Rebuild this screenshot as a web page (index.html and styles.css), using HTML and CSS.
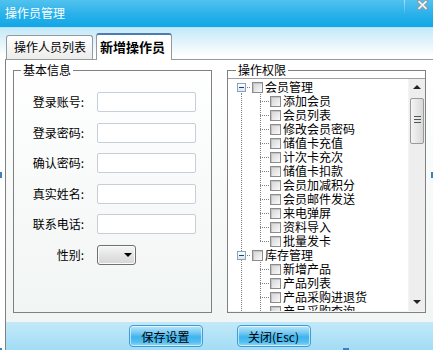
FILE: index.html
```html
<!DOCTYPE html>
<html lang="zh-CN">
<head>
    <meta charset="UTF-8">
    <title>操作员管理</title>
    <link rel="stylesheet" href="styles.css">
</head>
<body>
    <div class="window">
        <div class="titlebar">
            <span class="title">操作员管理</span>
            <span class="sep"></span>
            <svg class="close" width="11" height="10" viewBox="0 0 11 10">
                <path d="M1.5 1.2 L9.5 8.8 M9.5 1.2 L1.5 8.8" stroke="#8a9aa6" stroke-width="3.6" stroke-linecap="square"/>
                <path d="M1.5 1.2 L9.5 8.8 M9.5 1.2 L1.5 8.8" stroke="#f2f4f5" stroke-width="1.8"/>
            </svg>
        </div>

        <div class="tabbar">
            <div class="tab">操作人员列表</div>
            <div class="tab active">新增操作员</div>
        </div>

        <div class="page">
            <div class="groups">
                <fieldset class="group basic">
                    <legend>基本信息</legend>
                    <div class="form">
                        <label>登录账号:</label><input type="text">
                        <label>登录密码:</label><input type="password">
                        <label>确认密码:</label><input type="password">
                        <label>真实姓名:</label><input type="text">
                        <label>联系电话:</label><input type="text">
                        <label>性别:</label>
                        <div class="select"><span class="arrow"></span></div>
                    </div>
                </fieldset>

                <fieldset class="group rights">
                    <legend>操作权限</legend>
                    <div class="tree">
                        <div class="nodes">
                            <div class="row"><span class="ln root first"><i class="exp"></i></span><span class="cb rootcb"></span><span class="txt">会员管理</span></div>
                            <div class="row"><span class="ln v"></span><span class="ln t"></span><span class="cb"></span><span class="txt">添加会员</span></div>
                            <div class="row"><span class="ln v"></span><span class="ln t"></span><span class="cb"></span><span class="txt">会员列表</span></div>
                            <div class="row"><span class="ln v"></span><span class="ln t"></span><span class="cb"></span><span class="txt">修改会员密码</span></div>
                            <div class="row"><span class="ln v"></span><span class="ln t"></span><span class="cb"></span><span class="txt">储值卡充值</span></div>
                            <div class="row"><span class="ln v"></span><span class="ln t"></span><span class="cb"></span><span class="txt">计次卡充次</span></div>
                            <div class="row"><span class="ln v"></span><span class="ln t"></span><span class="cb"></span><span class="txt">储值卡扣款</span></div>
                            <div class="row"><span class="ln v"></span><span class="ln t"></span><span class="cb"></span><span class="txt">会员加减积分</span></div>
                            <div class="row"><span class="ln v"></span><span class="ln t"></span><span class="cb"></span><span class="txt">会员邮件发送</span></div>
                            <div class="row"><span class="ln v"></span><span class="ln t"></span><span class="cb"></span><span class="txt">来电弹屏</span></div>
                            <div class="row"><span class="ln v"></span><span class="ln t"></span><span class="cb"></span><span class="txt">资料导入</span></div>
                            <div class="row"><span class="ln v"></span><span class="ln t last"></span><span class="cb"></span><span class="txt">批量发卡</span></div>
                            <div class="row"><span class="ln root"><i class="exp"></i></span><span class="cb rootcb"></span><span class="txt">库存管理</span></div>
                            <div class="row"><span class="ln v"></span><span class="ln t"></span><span class="cb"></span><span class="txt">新增产品</span></div>
                            <div class="row"><span class="ln v"></span><span class="ln t"></span><span class="cb"></span><span class="txt">产品列表</span></div>
                            <div class="row"><span class="ln v"></span><span class="ln t"></span><span class="cb"></span><span class="txt">产品采购进退货</span></div>
                            <div class="row"><span class="ln v"></span><span class="ln t"></span><span class="cb"></span><span class="txt">产品采购查询</span></div>
                        </div>
                        <div class="scrollbar">
                            <div class="sb-btn"><span class="up"></span></div>
                            <div class="thumb"><span class="grip"></span></div>
                            <div class="sb-track"></div>
                            <div class="sb-btn"><span class="down"></span></div>
                        </div>
                    </div>
                </fieldset>
            </div>

            <div class="footer">
                <button>保存设置</button>
                <button>关闭(Esc)</button>
            </div>
        </div>

        <span class="handle h-left"></span>
        <span class="handle h-right"></span>
        <span class="handle h-bottom"></span>
        <span class="handle h-corner"></span>
    </div>
</body>
</html>
```

FILE: styles.css
```css
body {
    margin: 0;
    padding: 0;
    overflow: hidden;
    font-family: 'Noto Sans CJK SC', 'Noto Sans', sans-serif;
    font-size: 12px;
    color: #000;
}

.window {
    position: relative;
    width: 433px;
    height: 350px;
    overflow: hidden;
    background: #fff;
}

.titlebar {
    position: relative;
    height: 28px;
    background: linear-gradient(#52c2ee, #2bb2ea 50%, #10a6e6);
    border-bottom: 1px solid #b6e2f5;
    box-sizing: border-box;
}

.title {
    display: block;
    padding-left: 5px;
    line-height: 26px;
    color: #fff;
    font-size: 12px;
}

.sep {
    position: absolute;
    left: 404px;
    top: 0;
    width: 1px;
    height: 15px;
    background: linear-gradient(#a6e0f6, rgba(166, 224, 246, 0));
}

.close {
    position: absolute;
    left: 417px;
    top: 0;
}

.tabbar {
    position: relative;
    z-index: 1;
    height: 32px;
    margin-bottom: -1px;
    padding-left: 6px;
    display: flex;
    align-items: flex-end;
    gap: 3px;
    background: linear-gradient(#c3e9f8, #e6f5fc 16px, #fff 28px) no-repeat;
    background-size: 100% 31px;
    box-sizing: border-box;
}

.tab {
    width: 87px;
    height: 24px;
    margin-bottom: 1px;
    box-sizing: border-box;
    border: 1px solid #919b9c;
    border-bottom: none;
    border-radius: 3px 3px 0 0;
    background: linear-gradient(#fff, #ececeb);
    padding-left: 7px;
    line-height: 22px;
}

.tab.active {
    width: 76px;
    height: 27px;
    margin-bottom: 0;
    padding-left: 3px;
    background: #fff;
    border-top: 2px solid #4b7cb6;
    font-weight: bold;
    font-size: 13px;
    line-height: 24px;
}

.page {
    margin-left: 5px;
    height: 291px;
    border-left: 1px solid #808080;
    border-top: 1px solid #919b9c;
    box-sizing: border-box;
    background: linear-gradient(#fff, #f1f5f4 262px);
    display: flex;
    flex-direction: column;
}

.groups {
    display: flex;
    gap: 15px;
    padding: 2px 0 0 7px;
}

.group {
    margin: 0;
    padding: 0;
    width: 199px;
    height: 251px;
    box-sizing: border-box;
    border: 1px solid #808080;
    min-width: 0;
}

.group legend {
    padding: 0 2px;
    margin-left: 7px;
    line-height: 16px;
    font-size: 12px;
}

.rights legend {
    margin-left: 8px;
}

.form {
    display: grid;
    grid-template-columns: 70px 99px;
    grid-auto-rows: 20px;
    column-gap: 13px;
    row-gap: 10.6px;
    padding-top: 14px;
    align-items: center;
}

.form label {
    text-align: right;
    font-size: 12px;
    line-height: 20px;
}

.form input {
    width: 99px;
    height: 20px;
    box-sizing: border-box;
    margin: 0;
    border: 1px solid #c6ced8;
    border-radius: 2px;
    background: #fff;
    font-size: 12px;
}

.select {
    position: relative;
    width: 39px;
    height: 20px;
    box-sizing: border-box;
    border: 1px solid #707070;
    border-radius: 3px;
    background: linear-gradient(#f6f6f6, #e4e4e4 50%, #d6d6d6);
    box-shadow: inset 0 0 0 1px #fbfbfb;
}

.select .arrow {
    position: absolute;
    left: 26px;
    top: 7px;
    border-left: 4px solid transparent;
    border-right: 4px solid transparent;
    border-top: 4px solid #000;
}

.tree {
    display: flex;
    height: 233px;
    box-sizing: border-box;
    border-top: 1px solid #a0a0a0;
    background: #fff;
    overflow: hidden;
}

.nodes {
    flex: 1;
    padding: 1px 0 0 3px;
    overflow: hidden;
}

.row {
    display: flex;
    align-items: center;
    height: 14px;
    white-space: nowrap;
}

.ln {
    position: relative;
    flex: none;
    width: 20px;
    height: 14px;
}

.ln.t {
    width: 19px;
}

.ln::before,
.ln::after {
    content: "";
    position: absolute;
}

.ln.v::before,
.ln.root::before {
    left: 10px;
    top: 0;
    bottom: 0;
    width: 1px;
    background: repeating-linear-gradient(#808080 0 1px, transparent 1px 2px);
}

.ln.root.first::before {
    top: 7px;
}

.ln.root::after {
    left: 14px;
    top: 7px;
    width: 6px;
    height: 1px;
    background: repeating-linear-gradient(90deg, #808080 0 1px, transparent 1px 2px);
}

.ln.t::before {
    left: 9px;
    top: 0;
    bottom: 0;
    width: 1px;
    background: repeating-linear-gradient(#808080 0 1px, transparent 1px 2px);
}

.ln.t.last::before {
    bottom: 7px;
}

.ln.t::after {
    left: 9px;
    top: 7px;
    width: 10px;
    height: 1px;
    background: repeating-linear-gradient(90deg, #808080 0 1px, transparent 1px 2px);
}

.exp {
    position: absolute;
    z-index: 1;
    left: 6px;
    top: 3px;
    width: 9px;
    height: 9px;
    box-sizing: border-box;
    border: 1px solid #8aa4bd;
    background: linear-gradient(#fff, #dfe6ec);
}

.exp::after {
    content: "";
    position: absolute;
    left: 1px;
    top: 3px;
    width: 5px;
    height: 1px;
    background: #1c3f94;
}

.cb {
    flex: none;
    width: 11px;
    height: 11px;
    box-sizing: border-box;
    border: 1px solid #8c8c8c;
    background: linear-gradient(135deg, #d2d2d2, #eeeeee 70%, #fafafa);
    box-shadow: inset 1px 1px 0 #c4c4c4;
}

.cb.rootcb {
    margin-left: 1px;
}

.txt {
    margin-left: 2px;
    font-size: 12px;
    line-height: 14px;
}

.scrollbar {
    flex: none;
    width: 16px;
    display: flex;
    flex-direction: column;
    background: #eeeeee;
    border-left: 1px solid #f4f4f4;
}

.sb-btn {
    position: relative;
    height: 18px;
    flex: none;
}

.sb-btn .up,
.sb-btn .down {
    position: absolute;
    left: 4px;
    border-left: 4px solid transparent;
    border-right: 4px solid transparent;
}

.sb-btn .up {
    top: 6px;
    border-bottom: 4px solid #222;
}

.sb-btn .down {
    top: 7px;
    border-top: 4px solid #222;
}

.thumb {
    position: relative;
    flex: none;
    height: 46px;
    margin: 1px 1px 0 1px;
    box-sizing: border-box;
    border: 1px solid #9a9a9a;
    border-radius: 2px;
    background: linear-gradient(90deg, #f4f4f4, #e4e4e4 60%, #d8d8d8);
}

.grip {
    position: absolute;
    left: 3px;
    top: 17px;
    width: 7px;
    height: 7px;
    background: repeating-linear-gradient(#555 0 1px, transparent 1px 3px);
}

.sb-track {
    flex: 1;
}

.footer {
    margin-top: 9px;
    flex: 1;
    display: flex;
    justify-content: center;
    align-items: flex-start;
    gap: 34px;
    padding-top: 3px;
    background: linear-gradient(#c3e9f9, #a2dcf5);
}

.footer button {
    width: 74px;
    height: 22px;
    padding: 0;
    border: 1px solid #3f9bd6;
    border-radius: 4px;
    background: linear-gradient(#b9e6fb, #7fcdf3 30%, #3db4ed 55%, #53bff1 80%, #8fd6f6);
    box-shadow: inset 0 0 0 1px rgba(255, 255, 255, 0.6);
    font-family: 'Noto Sans CJK SC', 'Noto Sans', sans-serif;
    font-size: 12px;
    color: #000;
    cursor: pointer;
}

.handle {
    position: absolute;
    background: #3d7fc4;
}

.h-left {
    left: 0;
    top: 172px;
    width: 2px;
    height: 6px;
}

.h-right {
    left: 431px;
    top: 172px;
    width: 2px;
    height: 6px;
}

.h-bottom {
    left: 343px;
    top: 348px;
    width: 6px;
    height: 2px;
}

.h-corner {
    left: 0;
    top: 348px;
    width: 2px;
    height: 2px;
}
```
